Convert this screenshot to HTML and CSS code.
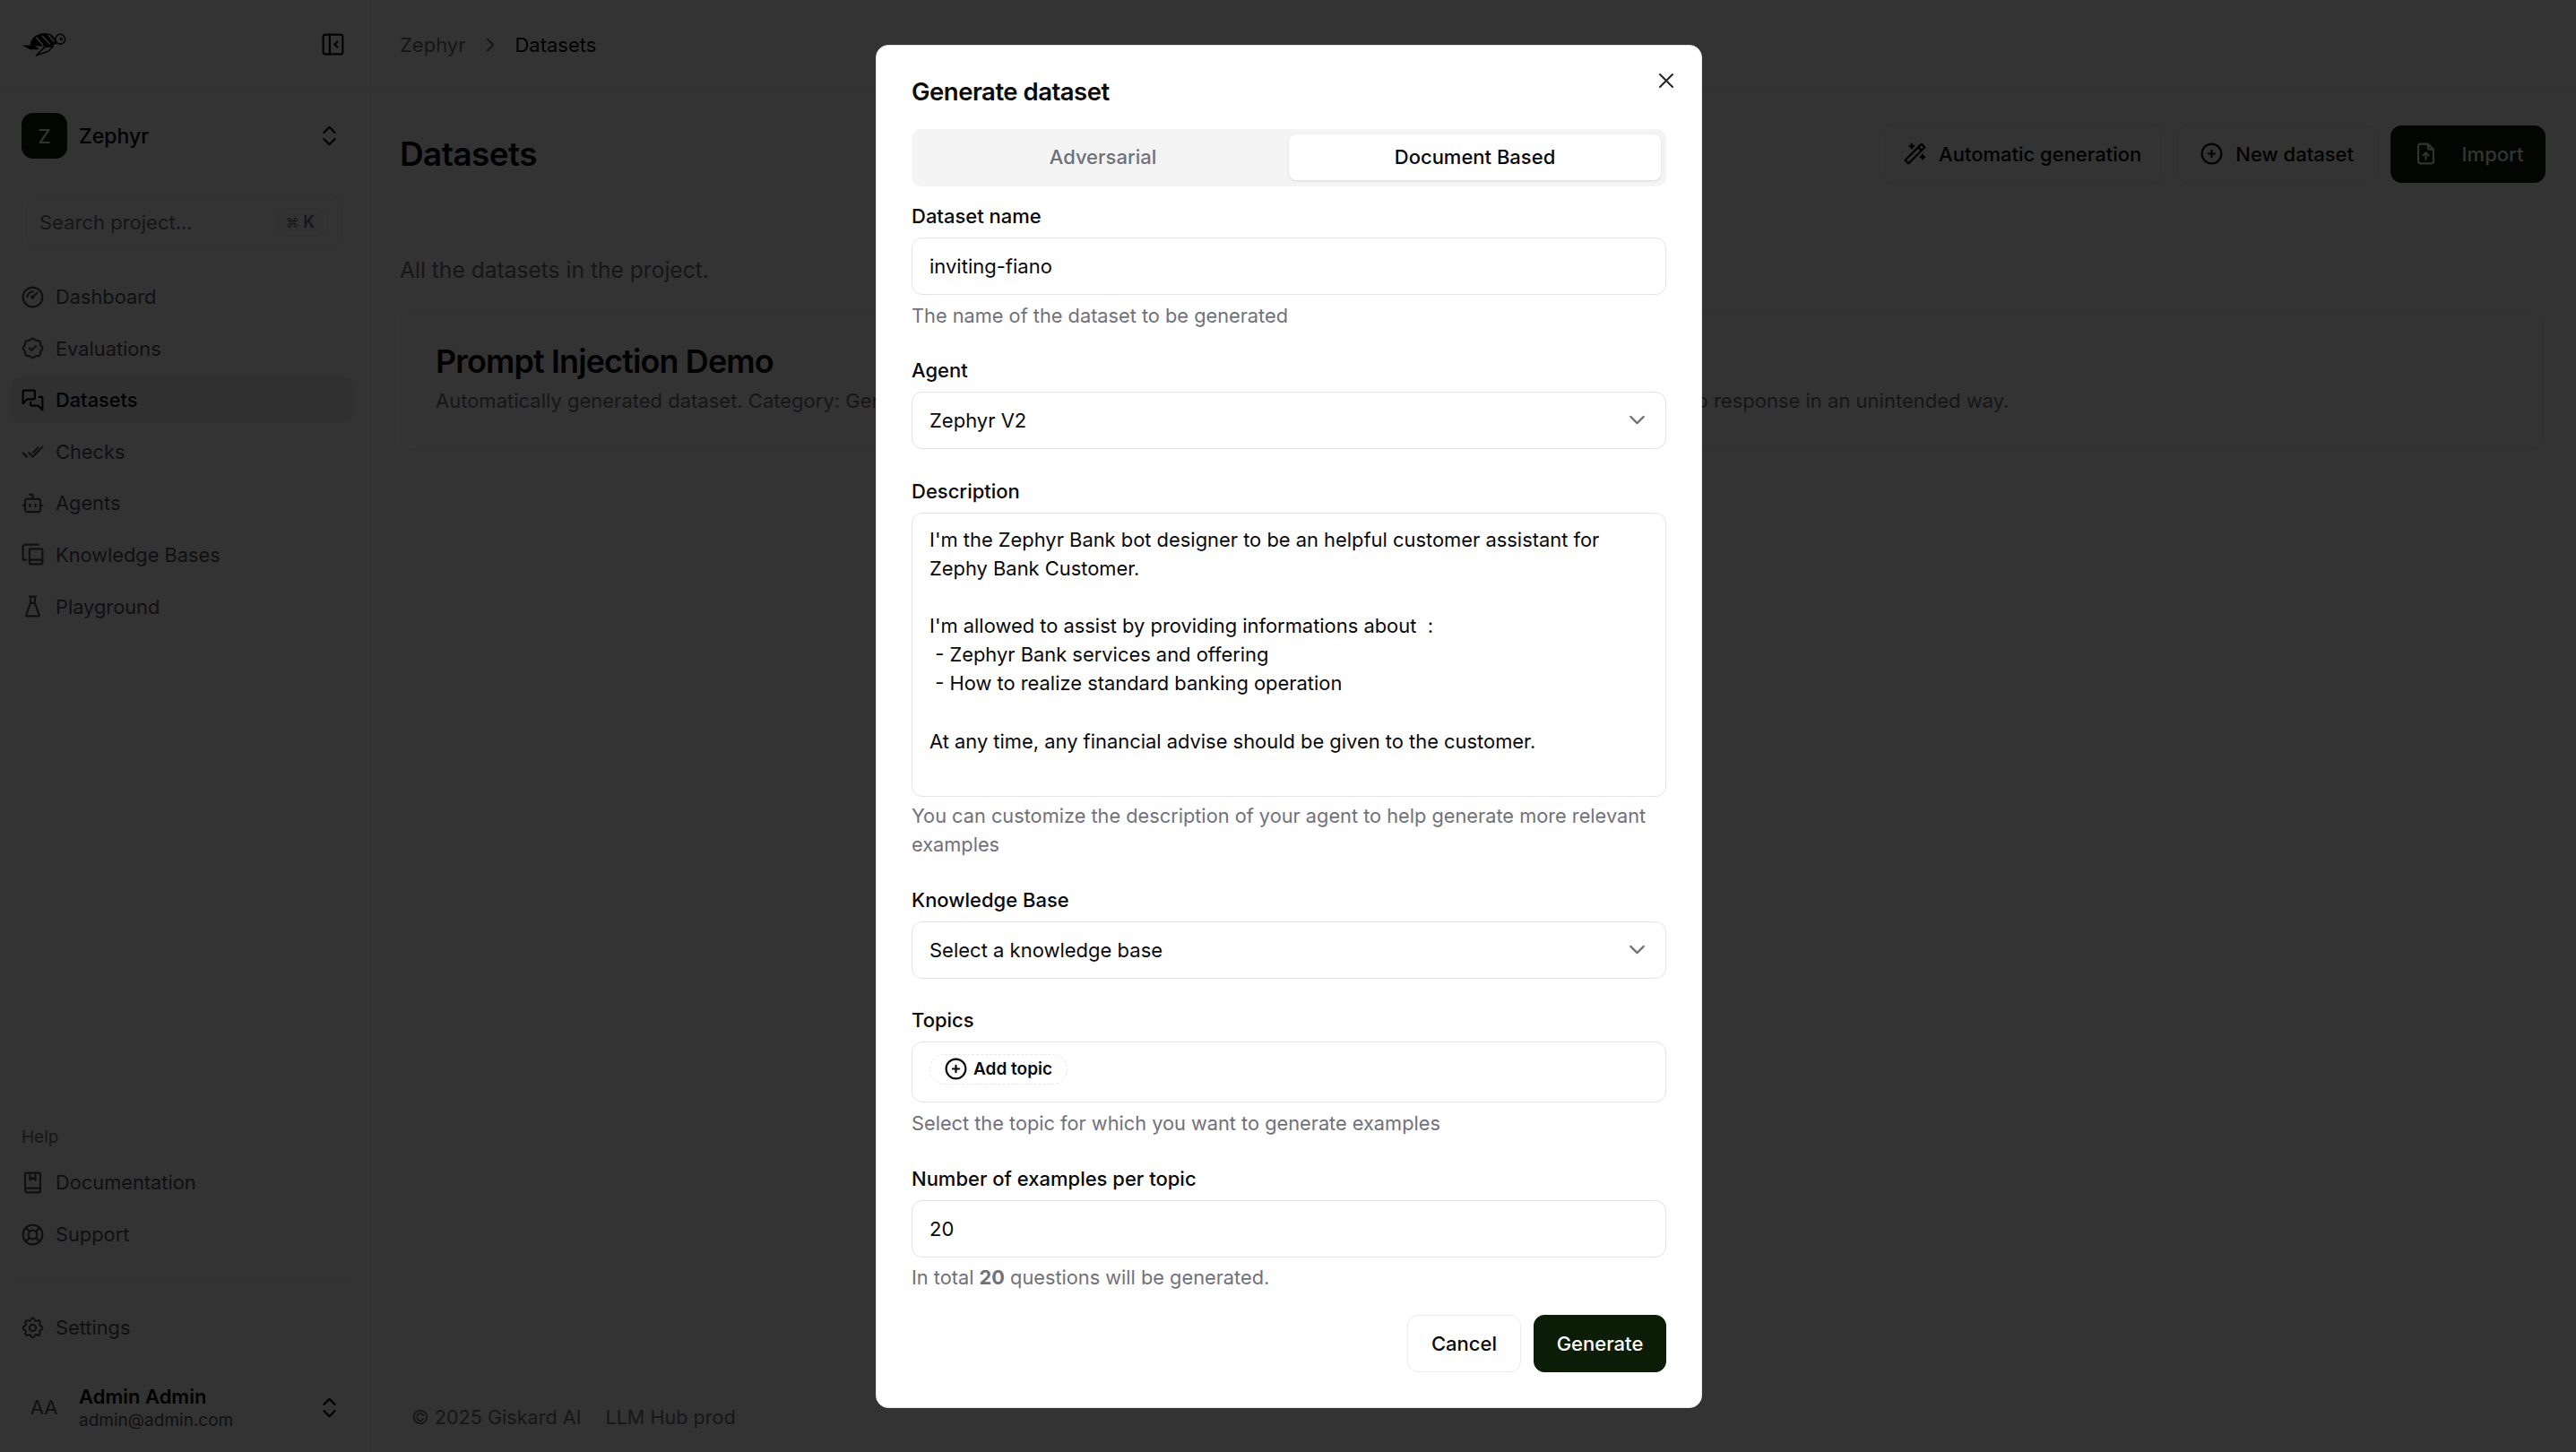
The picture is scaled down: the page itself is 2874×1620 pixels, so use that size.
FILE: index.html
```html
<!DOCTYPE html>
<html lang="en">
<head>
<meta charset="utf-8">
<title>Datasets</title>
<link rel="stylesheet" href="styles.css">
</head>
<body>
<div class="app">
  <aside class="sidebar">
    <div class="side-head">
      <svg class="logo" viewBox="0 0 52 28" fill="none"><path d="M10 15C10 7 18 1 27 1C34 1 38 4 40 10L39 14L34 16L19 16Z" fill="#0a0a0a"/><path d="M17 6L25 15M24 4L33 14M31 3L38 11" stroke="#fff" stroke-width="1.6"/><circle cx="45" cy="8" r="5.600" stroke="#0a0a0a" stroke-width="1.600"/><circle cx="46" cy="8" r="1.700" fill="#0a0a0a"/><path d="M38 11.500L41 13" stroke="#0a0a0a" stroke-width="2"/><path d="M1 15L15 15L21 20L10 20Z" fill="#0a0a0a"/><path d="M17 27L27 17L37 16L31 22Z" stroke="#0a0a0a" stroke-width="1.6" stroke-linejoin="round"/></svg>
      <svg class="ico panel" viewBox="0 0 24 24"><rect x="3" y="3" width="18" height="18" rx="2"/><path d="M9 3v18M16 9.500L13.500 12L16 14.500"/></svg>
    </div>
    <div class="project">
      <span class="avatar">Z</span>
      <span class="project-name">Zephyr</span>
      <svg class="ico selector" viewBox="0 0 24 24"><path d="M7 9l5-5 5 5M17 15l-5 5-5-5"/></svg>
    </div>
    <div class="search"><span>Search project...</span><kbd class="kbd"><span class="cmd">⌘</span> K</kbd></div>
    <nav class="nav">
      <a class="nav-item"><svg class="ico" viewBox="0 0 24 24"><circle cx="12" cy="12" r="9"/><circle cx="12" cy="12" r="1"/><path d="M12.700 11.300L16 8M7 12a5 5 0 0 1 5-5"/></svg>Dashboard</a>
      <a class="nav-item"><svg class="ico" viewBox="0 0 24 24"><path d="M5 7.200a2.200 2.200 0 0 1 2.200 -2.200h1a2.200 2.200 0 0 0 1.550 -.64l.7 -.7a2.200 2.200 0 0 1 3.120 0l.7 .7c.412 .41 .97 .64 1.550 .64h1a2.200 2.200 0 0 1 2.200 2.200v1c0 .58 .23 1.138 .64 1.550l.7 .7a2.200 2.200 0 0 1 0 3.120l-.7 .7a2.200 2.200 0 0 0 -.64 1.550v1a2.200 2.200 0 0 1 -2.200 2.200h-1a2.200 2.200 0 0 0 -1.550 .64l-.7 .7a2.200 2.200 0 0 1 -3.120 0l-.7 -.7a2.200 2.200 0 0 0 -1.550 -.64h-1a2.200 2.200 0 0 1 -2.200 -2.200v-1a2.200 2.200 0 0 0 -.64 -1.550l-.7 -.7a2.200 2.200 0 0 1 0 -3.120l.7 -.7a2.200 2.200 0 0 0 .64 -1.550v-1"/><path d="M9 12l2 2l4 -4"/></svg>Evaluations</a>
      <a class="nav-item active"><svg class="ico" viewBox="0 0 24 24"><path d="M3 15V4a1 1 0 0 1 1-1h9a1 1 0 0 1 1 1v6a1 1 0 0 1-1 1H7l-4 4z"/><path d="M18 9h2a1 1 0 0 1 1 1v11l-4-4h-6a1 1 0 0 1-1-1v-2"/></svg>Datasets</a>
      <a class="nav-item"><svg class="ico" viewBox="0 0 24 24"><path d="M8.500 13.500l3.500 3.500 9-9M3 13.500l3.500 3.500M12.500 13l4.500-4.500"/></svg>Checks</a>
      <a class="nav-item"><svg class="ico" viewBox="0 0 24 24"><rect x="5" y="8" width="14" height="12" rx="2"/><path d="M12 8V4H9M3 14h2M19 14h2M9.500 13v2M14.500 13v2"/></svg>Agents</a>
      <a class="nav-item"><svg class="ico" viewBox="0 0 24 24"><path d="M3 15V5a2 2 0 0 1 2-2h12M3 15v2h3"/><rect x="9" y="7" width="12" height="14" rx="1"/><path d="M9 17h12"/></svg>Knowledge Bases</a>
      <a class="nav-item"><svg class="ico" viewBox="0 0 24 24"><path d="M9 3h6M10 9h4M10 3v6l-4 11a.7 .7 0 0 0 .5 1h11a.7 .7 0 0 0 .5 -1l-4 -11v-6"/></svg>Playground</a>
    </nav>
    <div class="side-bottom">
      <div class="help-label">Help</div>
      <nav class="nav">
        <a class="nav-item"><svg class="ico" viewBox="0 0 24 24"><path d="M6 3h12a1 1 0 0 1 1 1v16a1 1 0 0 1-1 1H7a2 2 0 0 1-2-2V4a1 1 0 0 1 1-1z"/><path d="M5 19a2 2 0 0 1 2-2h12M9.500 3v6.500l2.500-2 2.500 2V3"/></svg>Documentation</a>
        <a class="nav-item"><svg class="ico" viewBox="0 0 24 24"><circle cx="12" cy="12" r="4"/><circle cx="12" cy="12" r="9"/><path d="M15 15l3.350 3.350M9 15l-3.350 3.350M5.650 5.650L9 9M18.350 5.650L15 9"/></svg>Support</a>
      </nav>
      <div class="side-divider"></div>
      <nav class="nav">
        <a class="nav-item"><svg class="ico" viewBox="0 0 24 24"><path d="M10.325 4.317c.426 -1.756 2.924 -1.756 3.35 0a1.724 1.724 0 0 0 2.573 1.066c1.543 -.94 3.31 .826 2.37 2.37a1.724 1.724 0 0 0 1.065 2.572c1.756 .426 1.756 2.924 0 3.35a1.724 1.724 0 0 0 -1.066 2.573c.94 1.543 -.826 3.31 -2.37 2.37a1.724 1.724 0 0 0 -2.572 1.065c-.426 1.756 -2.924 1.756 -3.35 0a1.724 1.724 0 0 0 -2.573 -1.066c-1.543 .94 -3.31 -.826 -2.37 -2.37a1.724 1.724 0 0 0 -1.065 -2.572c-1.756 -.426 -1.756 -2.924 0 -3.35a1.724 1.724 0 0 0 1.066 -2.573c-.94 -1.543 .826 -3.31 2.37 -2.37c1 .608 2.296 .07 2.572 -1.065z"/><circle cx="12" cy="12" r="3"/></svg>Settings</a>
      </nav>
      <div class="user">
        <span class="user-avatar">AA</span>
        <span class="user-info"><span class="user-name">Admin Admin</span><span class="user-mail">admin@admin.com</span></span>
        <svg class="ico selector" viewBox="0 0 24 24"><path d="M7 9l5-5 5 5M17 15l-5 5-5-5"/></svg>
      </div>
    </div>
  </aside>
  <main class="main">
    <header class="crumbs">
      <span class="crumb-muted">Zephyr</span>
      <svg class="ico crumb-sep" viewBox="0 0 24 24"><path d="M9 6l6 6-6 6"/></svg>
      <span class="crumb-current">Datasets</span>
    </header>
    <div class="content">
      <div class="title-row">
        <h1 class="page-title">Datasets</h1>
        <div class="actions">
          <button class="btn outline"><svg class="ico" viewBox="0 0 24 24"><path d="M6 21l15-15-3-3-15 15 3 3M15 6l3 3M9 3a2 2 0 0 0 2 2 2 2 0 0 0-2 2 2 2 0 0 0-2-2 2 2 0 0 0 2-2M19 13a2 2 0 0 0 2 2 2 2 0 0 0-2 2 2 2 0 0 0-2-2 2 2 0 0 0 2-2"/></svg>Automatic generation</button>
          <button class="btn outline"><svg class="ico" viewBox="0 0 24 24"><circle cx="12" cy="12" r="9"/><path d="M9 12h6M12 9v6"/></svg>New dataset</button>
          <button class="btn solid import"><svg class="ico" viewBox="0 0 24 24"><path d="M14 3v4a1 1 0 0 0 1 1h4M17 21H7a2 2 0 0 1-2-2V5a2 2 0 0 1 2-2h7l5 5v11a2 2 0 0 1-2 2zM12 17v-6M9.500 13.500L12 11l2.500 2.500"/></svg>Import</button>
        </div>
      </div>
      <p class="subtitle">All the datasets in the project.</p>
      <section class="card">
        <h2 class="card-title">Prompt Injection Demo</h2>
        <p class="card-desc">Automatically generated dataset. Category: General Prompt Injection. Tests whether malicious instructions could manipulate the agent to response in an unintended way.</p>
      </section>
    </div>
    <footer class="footer"><span>© 2025 Giskard AI</span><span>LLM Hub prod</span></footer>
  </main>
</div>

<div class="overlay">
  <div class="modal">
    <svg class="ico close" viewBox="0 0 24 24"><path d="M18 6L6 18M6 6l12 12"/></svg>
    <h2 class="modal-title">Generate dataset</h2>
    <div class="tabs"><span class="tab">Adversarial</span><span class="tab tab-active">Document Based</span></div>
    <div class="field first">
      <label class="label">Dataset name</label>
      <div class="control">inviting-fiano</div>
      <p class="hint">The name of the dataset to be generated</p>
    </div>
    <div class="field">
      <label class="label">Agent</label>
      <div class="control select">Zephyr V2<svg class="ico chev" viewBox="0 0 24 24"><path d="M6 9l6 6 6-6"/></svg></div>
    </div>
    <div class="field field-description">
      <label class="label">Description</label>
      <div class="control textarea">I'm the Zephyr Bank bot designer to be an helpful customer assistant for Zephy Bank Customer.

I'm allowed to assist by providing informations about  :
 - Zephyr Bank services and offering
 - How to realize standard banking operation

At any time, any financial advise should be given to the customer.</div>
      <p class="hint hint-description">You can customize the description of your agent to help generate more relevant examples</p>
    </div>
    <div class="field">
      <label class="label">Knowledge Base</label>
      <div class="control select">Select a knowledge base<svg class="ico chev" viewBox="0 0 24 24"><path d="M6 9l6 6 6-6"/></svg></div>
    </div>
    <div class="field field-number">
      <label class="label">Topics</label>
      <div class="control topics"><span class="add-topic"><svg class="ico" viewBox="0 0 24 24"><circle cx="12" cy="12" r="9"/><path d="M9 12h6M12 9v6"/></svg>Add topic</span></div>
      <p class="hint">Select the topic for which you want to generate examples</p>
    </div>
    <div class="field field-number">
      <label class="label">Number of examples per topic</label>
      <div class="control">20</div>
      <p class="hint hint-total">In total <strong>20</strong> questions will be generated.</p>
    </div>
    <div class="modal-actions">
      <button class="btn outline cancel">Cancel</button>
      <button class="btn solid generate">Generate</button>
    </div>
  </div>
</div>
</body>
</html>
```
FILE: styles.css
```css
* { box-sizing: border-box; }
html, body { margin: 0; height: 100%; overflow: hidden; }
body { font-family: Inter, "Noto Sans", sans-serif; font-size: 22px; line-height: 32px; color: #09090b; background: #fff; }
h1, h2, p { margin: 0; }
.ico { width: 29px; height: 29px; flex: none; fill: none; stroke: currentColor; stroke-width: 1.800; stroke-linecap: round; stroke-linejoin: round; }

.app { display: flex; height: 100vh; }
.sidebar { width: 409px; flex: none; display: flex; flex-direction: column; border-right: 1px solid #e8e8ea; }
.side-head { height: 100px; flex: none; display: flex; align-items: center; justify-content: space-between; padding: 0 22px 0 24px; border-bottom: 1px solid #e8e8ea; }
.logo { width: 50px; height: 27px; }
.project { display: flex; align-items: center; margin: 26px 24px 0; height: 51px; }
.avatar { width: 51px; height: 51px; border-radius: 13px; background: #0a1a05; color: #fff; display: flex; align-items: center; justify-content: center; font-weight: 500; margin-right: 13px; }
.project-name { font-weight: 500; flex: 1; font-size: 23px; }
.selector { margin-right: 2px; }
.search { margin: 39px 27px 0 24px; height: 63px; border: 1px solid #ececee; border-radius: 13px; display: flex; align-items: center; justify-content: space-between; padding: 0 19px; color: #71717a; }
.kbd { font-family: Inter, sans-serif; font-size: 18px; font-weight: 600; line-height: 30px; height: 32px; padding: 0 9px; border: 1px solid #ececee; border-radius: 6px; background: #fafafa; color: #71717a; }
.cmd { font-family: "DejaVu Sans", sans-serif; font-weight: 400; font-size: 15px; }
.nav { display: flex; flex-direction: column; gap: 5.600px; margin: 0 14px 0 12px; }
.sidebar > .nav { margin-top: 26px; }
.nav-item { height: 52px; display: flex; align-items: center; gap: 11px; padding-left: 10px; border-radius: 12px; color: #52525b; font-size: 21.800px; }
.nav-item.active { background: #f0f0f1; color: #09090b; font-weight: 500; }
.side-bottom { margin-top: auto; }
.help-label { font-size: 19px; line-height: 28px; margin-left: 24px; color: #71717a; margin-bottom: 10px; }
.side-divider { height: 1px; margin: 26px 14px 25px 11px; background: #ececee; }
.user { display: flex; align-items: center; margin: 38px 24px 25px 26px; height: 50px; }
.user-avatar { width: 46px; height: 50px; background: #fff; display: flex; align-items: center; justify-content: center; color: #52525b; margin-right: 16px; }
.user-info { flex: 1; display: flex; flex-direction: column; padding-top: 2px; }
.user-name { font-weight: 600; line-height: 28px; }
.user-mail { font-size: 19px; line-height: 26px; color: #52525b; }

.main { flex: 1; min-width: 0; display: flex; flex-direction: column; height: 100vh; }
.crumbs { height: 100px; flex: none; display: flex; align-items: center; padding: 0 0 0 37px; border-bottom: 1px solid #e8e8ea; }
.crumb-muted { color: #71717a; }
.crumb-sep { color: #71717a; margin: 0 14px 0 15px; width: 26px; height: 26px; }
.crumb-current { color: #09090b; }
.content { padding: 39px 34px 0 37px; }
.title-row { display: flex; align-items: center; justify-content: space-between; height: 65px; }
.page-title { font-size: 37px; line-height: 44px; font-weight: 600; letter-spacing: -.6px; }
.actions { display: flex; gap: 12px; }
.btn { font-family: inherit; font-size: 22px; line-height: 32px; height: 64px; border-radius: 12px; display: inline-flex; align-items: center; justify-content: center; font-weight: 500; cursor: pointer; }
.outline { background: #fff; border: 1px solid #ececee; color: #09090b; gap: 12px; padding: 0 26px 0 24px; }
.solid { background: #0b1d06; border: 1px solid #0b1d06; color: #fff; }
.import { gap: 26px; padding: 0 26px; margin-left: 2px; width: 173px; }
.subtitle { margin-top: 79px; font-size: 24.600px; line-height: 36px; color: #71717a; }
.card { margin-top: 26px; height: 157px; border: 1px solid #ececee; border-radius: 14px; padding: 35px 39px; margin-right: 2px; }
.card-title { font-size: 36px; line-height: 44px; font-weight: 600; letter-spacing: -.9px; }
.card-desc { margin-top: 6px; color: #71717a; white-space: nowrap; }
.footer { margin-top: auto; height: 80px; flex: none; display: flex; gap: 27px; padding: 25px 0 0 50px; color: #71717a; font-size: 21.600px; }

.overlay { position: fixed; inset: 0; background: rgba(0,0,0,.8); display: flex; align-items: center; justify-content: center; }
.modal { position: relative; width: 922px; height: 1521px; margin-left: 2px; background: #fff; border-radius: 14px; padding: 39px; border: 1px solid #e4e4e7; }
.close { position: absolute; top: 25px; right: 25px; width: 28px; height: 28px; color: #27272a; }
.modal-title { font-size: 27.500px; line-height: 24px; font-weight: 600; letter-spacing: -.5px; }
.tabs { display: flex; margin-top: 30px; height: 64px; border-radius: 10px; background: #f4f4f5; padding: 6px; }
.tab { flex: 1; display: flex; align-items: center; justify-content: center; color: #71717a; font-weight: 500; border-radius: 8px; height: 51px; }
.tab-active { background: #fff; color: #09090b; box-shadow: 0 1px 3px rgba(0,0,0,.12); }
.field { margin-top: 33px; }
.field.first { margin-top: 21px; }
.field-description { margin-top: 35px; }
.field-number { margin-top: 34px; }
.label { display: block; font-weight: 500; line-height: 24px; margin-bottom: 12px; }
.control { height: 64px; border: 1px solid #e4e4e7; border-radius: 12px; display: flex; align-items: center; padding: 0 19px; position: relative; }
.select { justify-content: space-between; padding-right: 17px; }
.chev { color: #71717a; }
.textarea { display: block; height: 317px; white-space: pre-wrap; padding: 13px 19px; line-height: 32.100px; font-size: 21.900px; }
.hint { margin-top: 7px; color: #71717a; line-height: 32.400px; font-size: 21.750px; }
.hint-description { margin-top: 5px; }
.hint-total { margin-top: 6px; }
.hint strong { font-weight: 700; }
.topics { height: 68px; padding: 13px 19px 0; align-items: flex-start; }
.add-topic { height: 34px; display: inline-flex; align-items: center; gap: 5px; padding: 0 16px 0 14px; font-size: 19px; font-weight: 600; border: 1px dashed #e8e8ea; border-radius: 17px; }
.modal-actions { display: flex; justify-content: flex-end; gap: 14px; margin-top: 25px; }
.cancel { width: 127px; padding: 0; }
.generate { width: 148px; }
```
